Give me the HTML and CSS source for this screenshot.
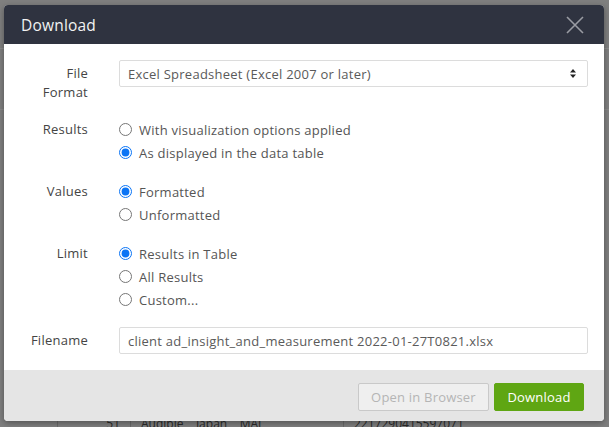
FILE: index.html
```html
<!DOCTYPE html>
<html>
<head>
<meta charset="utf-8">
<link rel="stylesheet" href="styles.css">
</head>
<body>
<div class="page">
  <div class="bg-top"></div>
  <div class="bg-band"></div>
  <div class="bg-spacer"></div>
  <div class="bg-row">
    <span class="c c1"></span>
    <span class="c c2">51</span>
    <span class="c c3">Audible &nbsp;&nbsp; Japan &nbsp;&nbsp; MAI</span>
    <span class="c c4">2217290415597071</span>
  </div>
</div>

<div class="modal">
  <div class="modal-header">
    <span class="title">Download</span>
    <svg class="close" width="18" height="18" viewBox="0 0 18 18"><path d="M1 1L17 17M17 1L1 17" stroke="#9a9ca3" stroke-width="1.6" fill="none"/></svg>
  </div>
  <div class="modal-body">
    <div class="row">
      <div class="label two">File<br>Format</div>
      <div class="select">
        <span>Excel Spreadsheet (Excel 2007 or later)</span>
        <svg width="6" height="9" viewBox="0 0 6 9"><path d="M3 0L6 3.5H0Z M3 9L0 5.5H6Z" fill="#222"/></svg>
      </div>
    </div>
    <div class="row">
      <div class="label">Results</div>
      <div class="opts">
        <label class="opt"><input type="radio" name="r"><span>With visualization options applied</span></label>
        <label class="opt"><input type="radio" name="r" checked><span>As displayed in the data table</span></label>
      </div>
    </div>
    <div class="row">
      <div class="label">Values</div>
      <div class="opts">
        <label class="opt"><input type="radio" name="v" checked><span>Formatted</span></label>
        <label class="opt"><input type="radio" name="v"><span>Unformatted</span></label>
      </div>
    </div>
    <div class="row">
      <div class="label">Limit</div>
      <div class="opts">
        <label class="opt"><input type="radio" name="l" checked><span>Results in Table</span></label>
        <label class="opt"><input type="radio" name="l"><span>All Results</span></label>
        <label class="opt"><input type="radio" name="l"><span>Custom...</span></label>
      </div>
    </div>
    <div class="row">
      <div class="label mid">Filename</div>
      <div class="input">client ad_insight_and_measurement 2022-01-27T0821.xlsx</div>
    </div>
  </div>
  <div class="modal-footer">
    <button class="btn ghost">Open in Browser</button>
    <button class="btn primary">Download</button>
  </div>
</div>
</body>
</html>
```

FILE: styles.css
```css
html, body {
  margin: 0;
  padding: 0;
}
body {
  width: 609px;
  height: 427px;
  overflow: hidden;
  background: #7f7f7f;
  font-family: "Open Sans", "Lato", sans-serif;
  position: relative;
}
.page {
  display: flex;
  flex-direction: column;
  height: 427px;
}
.bg-top {
  height: 48px;
  border-bottom: 1px solid #8c8c8c;
}
.bg-band {
  height: 60px;
  border-bottom: 1px solid #8a8a8a;
}
.bg-spacer {
  flex: 1;
}
.bg-row {
  height: 10px;
  display: flex;
  font-size: 12px;
  color: #2a2a2a;
  line-height: 14px;
  padding-top: 0;
}
.bg-row .c {
  border-left: 1px solid #6a6a6a;
  padding-left: 10px;
  white-space: nowrap;
  overflow: hidden;
}
.bg-row .c1 { width: 57px; border-left: none; padding-left: 0; }
.bg-row .c2 { width: 62px; text-align: right; padding-right: 10px; padding-left: 0; }
.bg-row .c3 { width: 202px; }
.bg-row .c4 { width: 205px; }

.modal {
  position: absolute;
  left: 4px;
  top: 5px;
  width: 600px;
  height: 416px;
  background: #fff;
  border-radius: 4px;
  overflow: hidden;
  box-shadow: 0 2px 6px rgba(0,0,0,0.35);
  display: flex;
  flex-direction: column;
}
.modal-header {
  height: 39px;
  background: #2f3340;
  display: flex;
  align-items: center;
  justify-content: space-between;
  padding: 0 20px 0 17px;
  flex-shrink: 0;
}
.title {
  color: #f2f2f2;
  font-size: 15.5px;
  letter-spacing: 0.2px;
}
.close {
  display: block;
  margin-top: 1px;
}
.modal-body {
  flex: 1;
  padding: 16px 16px 16px 20px;
  display: flex;
  flex-direction: column;
  gap: 16px;
  letter-spacing: 0.25px;
}
.row {
  display: grid;
  grid-template-columns: 64px 1fr;
  column-gap: 31px;
  align-items: start;
}
.label {
  text-align: right;
  font-size: 13px;
  color: #444;
  line-height: 23px;
}
.label.two {
  line-height: 19px;
  padding-top: 4px;
}
.label.mid {
  line-height: 26px;
}
.select {
  height: 25px;
  border: 1px solid #dcdcdc;
  border-radius: 2px;
  display: flex;
  align-items: center;
  justify-content: space-between;
  padding: 0 11px 0 8px;
  font-size: 13px;
  color: #5a5a5a;
}
.select svg {
  display: block;
}
.opts {
  display: flex;
  flex-direction: column;
}
.opt {
  display: flex;
  align-items: center;
  height: 23px;
  font-size: 13px;
  color: #555;
}
.opt input {
  margin: 0 7px 0 0;
  width: 13px;
  height: 13px;
  accent-color: #0b74f5;
}
.input {
  height: 25px;
  border: 1px solid #dcdcdc;
  border-radius: 2px;
  display: flex;
  align-items: center;
  padding: 0 8px;
  font-size: 13px;
  color: #5a5a5a;
}
.modal-footer {
  height: 52px;
  box-sizing: border-box;
  background: #e5e5e5;
  display: flex;
  justify-content: flex-end;
  align-items: flex-start;
  gap: 5px;
  padding: 13px 20px 0 0;
  flex-shrink: 0;
}
.btn {
  height: 28px;
  font-family: inherit;
  font-size: 13px;
  letter-spacing: 0.2px;
  border-radius: 2px;
  padding: 0;
  cursor: default;
}
.btn.ghost {
  width: 131px;
  background: #efefef;
  border: 1px solid #c9c9c9;
  color: #b5b5b5;
}
.btn.primary {
  width: 90px;
  background: #5fa613;
  border: 1px solid #5fa613;
  color: #fff;
}
```
